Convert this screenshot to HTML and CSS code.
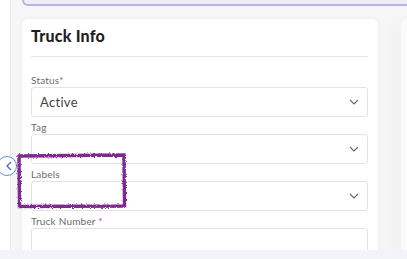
FILE: index.html
```html
<!DOCTYPE html>
<html lang="en">
<head>
  <meta charset="UTF-8">
  <title>Truck Info</title>
  <link rel="stylesheet" href="styles.css">
</head>
<body>
  <div class="page">
    <div class="rail"></div>
    <div class="main">
      <div class="banner"></div>
      <div class="row">
        <div class="card">
          <h2 class="card-title">Truck Info</h2>
          <div class="field">
            <label>Status<span class="req">*</span></label>
            <div class="select">
              <span>Active</span>
              <svg class="chev" width="10" height="6" viewBox="0 0 10 6"><path d="M1 1l4 4 4-4" fill="none" stroke="#666" stroke-width="1.1"/></svg>
            </div>
          </div>
          <div class="field">
            <label>Tag</label>
            <div class="select">
              <span></span>
              <svg class="chev" width="10" height="6" viewBox="0 0 10 6"><path d="M1 1l4 4 4-4" fill="none" stroke="#666" stroke-width="1.1"/></svg>
            </div>
          </div>
          <div class="field">
            <label>Labels</label>
            <div class="select">
              <span></span>
              <svg class="chev" width="10" height="6" viewBox="0 0 10 6"><path d="M1 1l4 4 4-4" fill="none" stroke="#666" stroke-width="1.1"/></svg>
            </div>
          </div>
          <div class="field">
            <label>Truck Number <span class="req">*</span></label>
            <div class="select"></div>
          </div>
        </div>
        <div class="side"></div>
      </div>
    </div>
  </div>
  <div class="footer"></div>

  <button class="collapse">
    <svg width="8" height="10" viewBox="0 0 8 10"><path d="M6 1L2 5l4 4" fill="none" stroke="#4f6fd8" stroke-width="1.4"/></svg>
  </button>

  <svg class="marker" width="116" height="60" viewBox="0 0 116 60">
    <defs>
      <filter id="rough">
        <feTurbulence type="fractalNoise" baseFrequency="1.2" numOctaves="2" seed="5"/>
        <feDisplacementMap in="SourceGraphic" scale="3"/>
      </filter>
    </defs>
    <path d="M5 5 L110 4 L110.5 55 L5.5 55.5 Z" fill="none" stroke="#7e2a8f" stroke-width="3.4" filter="url(#rough)"/>
  </svg>
</body>
</html>
```

FILE: styles.css
```css
body {
  margin: 0;
  font-family: Lato, "Open Sans", sans-serif;
  background: #f6f6f7;
  height: 259px;
  overflow: hidden;
  position: relative;
}
.page {
  display: flex;
  height: 250px;
  overflow: hidden;
}
.rail {
  width: 10px;
  background: #fff;
  border-right: 1px solid #e9e9ec;
}
.main {
  flex: 1;
  padding-left: 11px;
}
.banner {
  height: 4px;
  background: #eeeefb;
  border: 2px solid #b9b5e3;
  border-top: none;
  border-right: none;
  border-radius: 0 0 0 8px;
}
.row {
  display: flex;
  margin-top: 13px;
  gap: 23px;
}
.card {
  width: 337px;
  flex-shrink: 0;
  background: #fff;
  border-radius: 6px;
  padding: 0 10px 0 9px;
  box-shadow: 0 0 6px rgba(0, 0, 0, 0.04);
  height: 240px;
}
.card-title {
  margin: 0 0 16px;
  padding: 7px 0 10px;
  font-size: 16px;
  line-height: 20px;
  font-weight: 900;
  letter-spacing: 0.2px;
  color: #1f1f1f;
  border-bottom: 1px solid #e7e7e9;
}
.field {
  margin-bottom: 3px;
}
.field label {
  display: block;
  font-size: 10px;
  line-height: 14px;
  color: #6b6b6b;
  letter-spacing: 0.2px;
}
.req {
  color: #d0425a;
}
.select {
  height: 28px;
  border: 1px solid #e3e3e6;
  border-radius: 3px;
  display: flex;
  align-items: center;
  justify-content: space-between;
  padding: 0 8px;
  font-size: 13px;
  color: #444;
  letter-spacing: 0.3px;
}
.side {
  flex: 1;
  background: #fbfbfb;
  border-radius: 6px 0 0 0;
  box-shadow: -4px 0 14px rgba(0, 0, 0, 0.05);
}
.footer {
  height: 9px;
  background: #f2f4fa;
}
.collapse {
  position: absolute;
  left: -3px;
  top: 156px;
  width: 20px;
  height: 20px;
  border-radius: 50%;
  border: 1.2px solid #6d8ae3;
  background: #fff;
  padding: 0 0 0 4px;
  display: flex;
  align-items: center;
  justify-content: center;
}
.marker {
  position: absolute;
  left: 14px;
  top: 151px;
}
```
